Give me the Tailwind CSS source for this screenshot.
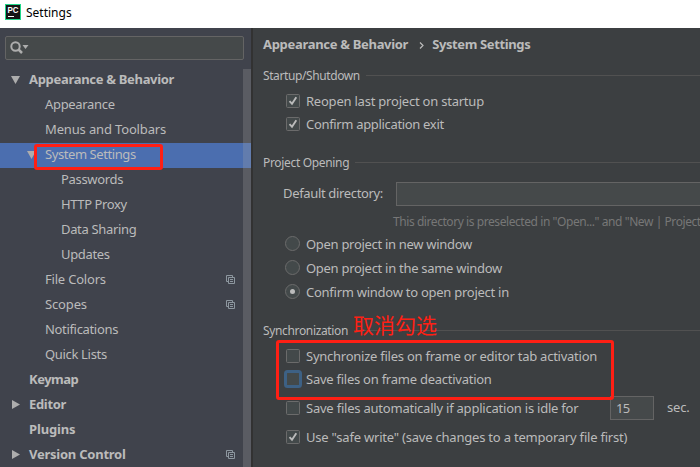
<!DOCTYPE html>
<html lang="en">
<head>
<meta charset="utf-8">
<title>Settings</title>
<script src="https://cdn.jsdelivr.net/npm/@tailwindcss/browser@4"></script>
</head>
<body class="relative flex h-[467px] w-[700px] flex-col overflow-hidden bg-[#3c3f41] font-['Noto_Sans','Noto_Sans_CJK_SC',sans-serif] text-[13px] whitespace-nowrap text-[#bbbbbb]">
<svg class="hidden">
  <symbol id="copy" viewBox="0 0 9 9"><path d="M2 6.500H.5V.5h6V2M2.500 2.500h6v6h-6zM4 4.500h3M4 6.500h3" fill="none" stroke="#8d979f"/></symbol>
  <symbol id="check" viewBox="0 0 14 14"><rect x=".5" y=".5" width="13" height="13" rx="1" fill="#43494a" stroke="#6b6b6b"/><path d="M3.500 7.200L6 9.700L10.300 3.200" fill="none" stroke="#bbbbbb" stroke-width="1.900"/></symbol>
  <symbol id="box" viewBox="0 0 14 14"><rect x=".5" y=".5" width="13" height="13" rx="1" fill="#43494a" stroke="#6b6b6b"/></symbol>
  <symbol id="radio" viewBox="0 0 15 15"><circle cx="7.500" cy="7.500" r="7" fill="#43494a" stroke="#6b6b6b"/></symbol>
</svg>
<header class="flex h-7 shrink-0 items-center bg-white pl-[5px] text-black">
  <svg class="-mt-1 h-4 w-4" viewBox="0 0 16 16"><rect width="16" height="16" fill="#21d789"/><rect x="1" y="1" width="14" height="14" fill="#151515"/><text x="2.500" y="8.500" font-family="Liberation Sans" font-weight="bold" font-size="8.500" textLength="11" lengthAdjust="spacingAndGlyphs" fill="#fff">PC</text><path d="M3 12.500h6" stroke="#fff"/></svg>
  <span class="-mt-0.5 ml-[5px] text-[12px]">Settings</span>
</header>
<div class="flex min-h-0 flex-1">
  <aside class="w-[251px] shrink-0 bg-[#40434c] pt-2">
    <div class="ml-[5px] flex h-6 w-[239px] items-center rounded-[2px] border border-[#646464] bg-[#45494a] pl-1">
      <svg class="h-3.5 w-[19px]" viewBox="0 0 19 14"><circle cx="5.500" cy="5.500" r="4.200" fill="none" stroke="#adadad" stroke-width="2"/><path d="M8.500 8.500L12 12" stroke="#adadad" stroke-width="2.500"/><path d="M12.500 4h6l-3 4z" fill="#adadad"/></svg>
    </div>
    <div class="relative mt-2">
      <nav class="leading-[23px] tracking-[-0.33px]">
        <div class="flex h-[25px]"><svg class="mt-2 ml-[11px] h-2 w-[9px]" viewBox="0 0 9 8"><path d="M0 0h9L4.500 8z" fill="#adadad"/></svg><b class="ml-[9px] tracking-[-0.31px]">Appearance &amp; Behavior</b></div>
        <div class="h-[25px] pl-[45px]">Appearance</div>
        <div class="h-[25px] pl-[45px] tracking-[-0.15px]">Menus and Toolbars</div>
        <div class="flex h-[25px] bg-[#4b6eaf]"><svg class="mt-2 ml-[27px] h-2 w-[9px]" viewBox="0 0 9 8"><path d="M0 0h9L4.500 8z" fill="#adadad"/></svg><span class="ml-[9px] tracking-[-0.42px]">System Settings</span></div>
        <div class="h-[25px] pl-[61px]">Passwords</div>
        <div class="h-[25px] pl-[61px] tracking-[-0.4px]">HTTP Proxy</div>
        <div class="h-[25px] pl-[61px]">Data Sharing</div>
        <div class="h-[25px] pl-[61px]">Updates</div>
        <div class="flex h-[25px] justify-between pr-4 pl-[45px]"><span class="tracking-[-0.2px]">File Colors</span><svg class="mt-[7px] h-[9px] w-[9px]"><use href="#copy"/></svg></div>
        <div class="flex h-[25px] justify-between pr-4 pl-[45px]"><span class="tracking-[-0.15px]">Scopes</span><svg class="mt-[7px] h-[9px] w-[9px]"><use href="#copy"/></svg></div>
        <div class="h-[25px] pl-[45px]">Notifications</div>
        <div class="h-[25px] pl-[45px]">Quick Lists</div>
        <div class="h-[25px] pl-[29px] font-bold tracking-[-0.5px]">Keymap</div>
        <div class="flex h-[25px]"><svg class="mt-[7px] ml-3 h-[9px] w-2" viewBox="0 0 8 9"><path d="M0 0v9l8-4.500z" fill="#adadad"/></svg><b class="ml-[9px]">Editor</b></div>
        <div class="h-[25px] pl-[29px] font-bold tracking-[-0.15px]">Plugins</div>
        <div class="flex h-[25px] pr-4"><svg class="mt-[7px] ml-3 h-[9px] w-2" viewBox="0 0 8 9"><path d="M0 0v9l8-4.500z" fill="#adadad"/></svg><b class="ml-[9px] flex-1 tracking-[-0.24px]">Version Control</b><svg class="mt-[7px] h-[9px] w-[9px]"><use href="#copy"/></svg></div>
      </nav>
      <div class="absolute top-px right-0 h-[400px] w-2 bg-[#a6a6a6]/25"></div>
    </div>
  </aside>
  <div class="w-0.5 shrink-0 bg-[#323232]"></div>
  <main class="min-w-0 flex-1">
    <div class="flex h-[34px] items-center pl-[10px] font-bold"><span class="tracking-[-0.31px]">Appearance &amp; Behavior</span><svg class="mr-2 ml-[11px] h-[7px] w-[5px]" viewBox="0 0 5 7"><path d="M1 .5l3 3l-3 3" fill="none" stroke="#bbb" stroke-width="1.200"/></svg><span class="tracking-[-0.38px]">System Settings</span></div>
    <div class="flex h-[27px] items-center pl-[10px] text-[12px]"><span class="pt-px tracking-[-0.4px]">Startup/Shutdown</span><i class="ml-[6px] h-px flex-1 bg-[#515151]"></i></div>
    <div class="flex h-[23px] pl-[33px] leading-[24px]"><svg class="mt-[5px] mr-[6px] h-3.5 w-3.5"><use href="#check"/></svg><span class="tracking-[-0.22px]">Reopen last project on startup</span></div>
    <div class="flex h-[23px] pl-[33px] leading-[25px]"><svg class="mt-[5px] mr-[6px] h-3.5 w-3.5"><use href="#check"/></svg><span class="tracking-[-0.33px]">Confirm application exit</span></div>
    <div class="mt-3.5 flex h-[27px] items-center pl-[10px] text-[12px]"><span class="pt-px tracking-[-0.33px]">Project Opening</span><i class="ml-[6px] h-px flex-1 bg-[#515151]"></i></div>
    <div class="flex h-9 items-center pl-[30px]"><span class="w-[113px] tracking-[-0.34px]">Default directory:</span><div class="h-6 flex-1 border border-r-0 border-[#646464] bg-[#45494a]"></div></div>
    <div class="h-5 overflow-hidden pl-[140px] text-[12px] leading-5 tracking-[-0.43px] text-[#777777]">This directory is preselected in "Open..." and "New | Project</div>
    <div class="flex h-6 pl-8 leading-[24px]"><svg class="mt-1 mr-[6px] h-[15px] w-[15px]"><use href="#radio"/></svg><span class="tracking-[-0.3px]">Open project in new window</span></div>
    <div class="flex h-6 pl-8 leading-[24px]"><svg class="mt-1 mr-[6px] h-[15px] w-[15px]"><use href="#radio"/></svg><span class="tracking-[-0.29px]">Open project in the same window</span></div>
    <div class="flex h-6 pl-8 leading-[24px]"><svg class="mt-1 mr-[6px] h-[15px] w-[15px]"><use href="#radio"/><circle cx="7.500" cy="7.500" r="2.500" fill="#bbb"/></svg><span class="tracking-[-0.26px]">Confirm window to open project in</span></div>
    <div class="mt-[13px] flex h-[27px] items-center pl-[10px] text-[12px]"><span class="pt-px tracking-[-0.35px]">Synchronization</span><i class="ml-[6px] h-px flex-1 bg-[#515151]"></i></div>
    <div class="flex h-[23px] pl-[33px] leading-[25px]"><svg class="mt-[5px] mr-[6px] h-3.5 w-3.5"><use href="#box"/></svg><span class="tracking-[-0.25px]">Synchronize files on frame or editor tab activation</span></div>
    <div class="flex h-[23px] pl-[31px] leading-[25px]"><svg class="mt-[3px] mr-1 h-[18px] w-[18px]" viewBox="0 0 18 18"><rect x="1.500" y="1.500" width="15" height="15" rx="2" fill="#43494a" stroke="#3d6185" stroke-width="3"/></svg><span class="tracking-[-0.25px]">Save files on frame deactivation</span></div>
    <div class="flex h-9 items-center pl-[33px]"><svg class="mr-[6px] h-3.5 w-3.5"><use href="#box"/></svg><span class="w-[304px] pt-0.5 tracking-[-0.22px]">Save files automatically if application is idle for</span><div class="h-6 w-11 border border-[#646464] bg-[#45494a] pl-[5px] leading-[22px] tracking-[-0.8px]">15</div><span class="ml-[13px] tracking-[-0.2px]">sec.</span></div>
    <div class="flex h-[22px] items-center pl-[33px]"><svg class="mr-[6px] h-3.5 w-3.5"><use href="#check"/></svg><span class="pt-px tracking-[-0.21px]">Use "safe write" (save changes to a temporary file first)</span></div>
  </main>
</div>
<div class="absolute top-[144px] left-[34px] h-[26px] w-[129px] rounded-[3px] border-[3px] border-[#ff1f14]"></div>
<div class="absolute top-[340px] left-[276px] h-[60px] w-[338px] rounded-[3px] border-[3px] border-[#ff1f14]"></div>
<div class="absolute top-[309px] left-[353px] font-['Noto_Sans_CJK_SC',sans-serif] text-[21px] leading-[30px] text-[#ff1f14]">取消勾选</div>
</body>
</html>
